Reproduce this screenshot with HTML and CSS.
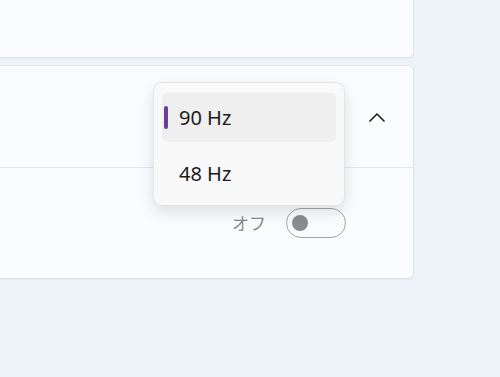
FILE: index.html
```html
<!DOCTYPE html>
<html lang="ja">
<head>
  <meta charset="UTF-8">
  <title>ディスプレイ</title>
  <link rel="stylesheet" href="styles.css">
</head>
<body>

  <div class="page">
    <div class="card top-card"></div>

    <div class="card rate-card">
      <div class="row head-row">
        <span class="chevron">
          <svg width="18" height="11" viewBox="0 0 18 11"><path d="M1.5 9.5 L9 2 L16.5 9.5" fill="none" stroke="#1a1a1a" stroke-width="1.5"/></svg>
        </span>
      </div>
      <div class="row toggle-row">
        <span class="state">オフ</span>
        <span class="toggle"><span class="knob"></span></span>
      </div>
    </div>

    <div class="menu">
      <div class="item selected"><span class="mark"></span>90 Hz</div>
      <div class="item">48 Hz</div>
    </div>
  </div>

</body>
</html>
```

FILE: styles.css
```css
body {
  margin: 0;
  background-color: #eef2f9;
  font-family: "Noto Sans", "Noto Sans CJK JP", sans-serif;
  overflow: hidden;
}
.page {
  display: flow-root;
  position: relative;
  width: 414px;
  height: 377px;
}
.card {
  margin-left: -20px;
  background: #fbfcfd;
  border: 1px solid #e1e5ea;
  border-radius: 6px;
  box-shadow: 0 1px 1px rgba(0,0,0,0.04);
}
.top-card {
  margin-top: -40px;
  height: 96px;
}
.rate-card {
  margin-top: 7px;
}
.row {
  display: flex;
  align-items: center;
  justify-content: flex-end;
}
.head-row {
  height: 101px;
  padding-right: 27px;
  border-bottom: 1px solid #e3e7ec;
}
.chevron {
  display: flex;
  margin-top: 1px;
}
.toggle-row {
  height: 110px;
  align-items: flex-start;
  padding-right: 67px;
  gap: 20px;
}
.state {
  margin-top: 44px;
  font-size: 17px;
  color: #8a8a8a;
  line-height: 24px;
}
.toggle {
  margin-top: 40px;
  box-sizing: border-box;
  width: 60px;
  height: 30px;
  border: 1px solid #a4a4a4;
  border-radius: 15px;
  display: flex;
  align-items: center;
  padding-left: 5px;
}
.knob {
  width: 16px;
  height: 16px;
  border-radius: 50%;
  background: #8c8c8c;
}
.menu {
  position: absolute;
  left: 153px;
  top: 82px;
  width: 192px;
  box-sizing: border-box;
  padding: 10px 8px 8px;
  background: #f9f9f9;
  border: 1px solid #e4e4e4;
  border-radius: 9px;
  box-shadow: 0 6px 16px rgba(0,0,0,0.12);
}
.item {
  position: relative;
  height: 49px;
  display: flex;
  align-items: center;
  padding-left: 17px;
  margin-bottom: 7px;
  font-size: 20px;
  color: #1b1b1b;
  border-radius: 5px;
}
.item:last-child {
  margin-bottom: 0;
  height: 48px;
}
.selected {
  background: #efefef;
}
.mark {
  position: absolute;
  left: 2px;
  top: 13px;
  width: 4px;
  height: 23px;
  border-radius: 2px;
  background: #6b3e9e;
}
```
